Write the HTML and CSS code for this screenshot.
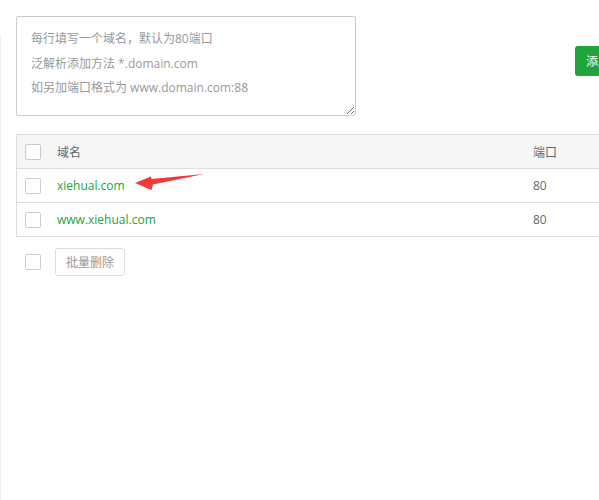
FILE: index.html
```html
<!DOCTYPE html>
<html lang="zh-CN">
<head>
<meta charset="utf-8">
<title>域名管理</title>
<link rel="stylesheet" href="styles.css">
</head>
<body>
<div class="page">
  <div class="edge"></div>
  <div class="main">
    <div class="top">
      <textarea class="domains" placeholder="每行填写一个域名，默认为80端口&#10;泛解析添加方法 *.domain.com&#10;如另加端口格式为 www.domain.com:88"></textarea>
      <button class="btn-add">添加</button>
    </div>
    <div class="table-wrap">
      <table class="list">
        <thead>
          <tr><th class="c-chk"><span class="chk"></span></th><th class="c-name">域名</th><th class="c-port">端口</th></tr>
        </thead>
        <tbody>
          <tr><td class="c-chk"><span class="chk"></span></td><td class="c-name"><a class="link">xiehual.com</a></td><td class="c-port">80</td></tr>
          <tr><td class="c-chk"><span class="chk"></span></td><td class="c-name"><a class="link">www.xiehual.com</a></td><td class="c-port">80</td></tr>
        </tbody>
      </table>
      <svg class="arrow" width="80" height="24" viewBox="130 170 80 24"><polygon points="135,183 151,176.5 151.5,179 204,174 153,184.5 151.5,190" fill="#f23838"/></svg>
    </div>
    <div class="bottom">
      <span class="chk"></span>
      <button class="btn-del">批量删除</button>
    </div>
  </div>
</div>
</body>
</html>
```
FILE: styles.css
```css
html, body {
  margin: 0;
  padding: 0;
  background: #fff;
  overflow: hidden;
}
body {
  font-family: "Open Sans", "Noto Sans CJK SC", sans-serif;
  font-size: 12px;
  color: #666;
}
.page {
  display: flex;
  height: 500px;
}
.edge {
  width: 1px;
  margin-top: 35px;
  background: #eee;
  flex: none;
}
.main {
  padding: 16px 0 0 15px;
  flex: none;
  width: 620px;
}
.top {
  display: flex;
  align-items: flex-start;
}
.domains {
  box-sizing: border-box;
  width: 340px;
  height: 100px;
  margin: 0;
  padding: 10px 14px;
  border: 1px solid #ccc;
  border-radius: 2px;
  font-family: "Open Sans", "Noto Sans CJK SC", sans-serif;
  font-size: 12px;
  line-height: 24.5px;
  color: #555;
  outline: none;
}
.domains::placeholder {
  color: #999;
}
.btn-add {
  margin: 30px 0 0 219px;
  height: 30px;
  padding: 0 11px;
  border: none;
  border-radius: 3px;
  background: #20a53a;
  color: #fff;
  font-family: "Open Sans", "Noto Sans CJK SC", sans-serif;
  font-size: 12px;
  white-space: nowrap;
  flex: none;
}
.table-wrap {
  position: relative;
  margin-top: 18px;
}
.list {
  width: 620px;
  border-collapse: collapse;
  border: 1px solid #ddd;
}
.list th, .list td {
  height: 33px;
  padding: 0;
  text-align: left;
  font-weight: normal;
  border-bottom: 1px solid #ddd;
  vertical-align: middle;
}
.list thead tr {
  background: #f6f6f6;
}
.c-chk {
  width: 32px;
  padding-left: 8px !important;
}
.c-name {
  width: 476px;
}
.chk {
  display: block;
  box-sizing: border-box;
  width: 16px;
  height: 16px;
  border: 1px solid #ccc;
  border-radius: 2px;
  background: #fff;
}
.link {
  color: #20a53a;
  text-decoration: none;
}
.arrow {
  position: absolute;
  left: 114px;
  top: 36px;
}
.bottom {
  display: flex;
  align-items: center;
  gap: 14px;
  margin-top: 11px;
  padding-left: 9px;
}
.btn-del {
  box-sizing: border-box;
  height: 28px;
  width: 70px;
  padding: 0;
  border: 1px solid #ddd;
  border-radius: 3px;
  background: #fff;
  color: #999;
  font-family: "Open Sans", "Noto Sans CJK SC", sans-serif;
  font-size: 12px;
}
```
